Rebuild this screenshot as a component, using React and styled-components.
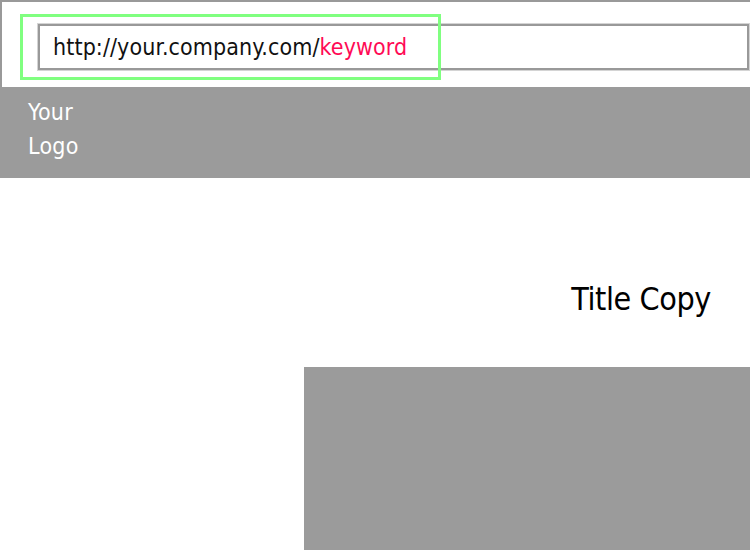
import styled, { createGlobalStyle } from "styled-components"

const Global = createGlobalStyle`
	html, body {
		margin: 0;
		padding: 0;
		background: #fff;
		font-family: "DejaVu Sans Condensed", "DejaVu Sans", sans-serif;
	}
`

const Page = styled.div`
	width: 750px;
	height: 550px;
	overflow: hidden;
	display: flex;
	flex-direction: column;
`
const AddressBar = styled.div`
	position: relative;
	height: 87px;
	border-top: 2px solid #999;
	border-left: 2px solid #999;
	padding: 22px 1px 0 36px;
	box-sizing: border-box;
`
const UrlField = styled.div`
	height: 46px;
	box-sizing: border-box;
	border: 2px solid #999;
	box-shadow: 0 0 0 1px #d4d4d4;
	display: flex;
	align-items: center;
	padding-left: 13px;
	font-size: 23px;
	letter-spacing: 0.1px;
	color: #111;
`
const Keyword = styled.span`
	color: #ff0a55;
`
const Highlight = styled.div`
	position: absolute;
	left: 18px;
	top: 12px;
	width: 421px;
	height: 66px;
	box-sizing: border-box;
	border: 3px solid #80ff80;
	pointer-events: none;
`
const Header = styled.header`
	height: 91px;
	background: #9b9b9b;
	padding: 8px 28px 0;
	box-sizing: border-box;
	color: #fff;
	font-size: 23px;
	line-height: 34px;
	letter-spacing: 0.3px;
`
const Main = styled.main`
	flex: 1;
	display: flex;
	flex-direction: column;
	align-items: flex-end;
`
const Title = styled.h1`
	margin: 96px 39px 0 0;
	font-size: 32px;
	font-weight: normal;
	line-height: 50px;
	letter-spacing: -0.4px;
	color: #000;
`
const Hero = styled.div`
	margin-top: 43px;
	width: 446px;
	flex: 1;
	background: #9b9b9b;
`

export default function App () {
	return (
		<>
			<Global />
			<Page>
				<AddressBar>
					<UrlField>
						http://your.company.com/<Keyword>keyword</Keyword>
					</UrlField>
					<Highlight />
				</AddressBar>
				<Header>
					Your<br />Logo
				</Header>
				<Main>
					<Title>Title Copy</Title>
					<Hero />
				</Main>
			</Page>
		</>
	)
}
